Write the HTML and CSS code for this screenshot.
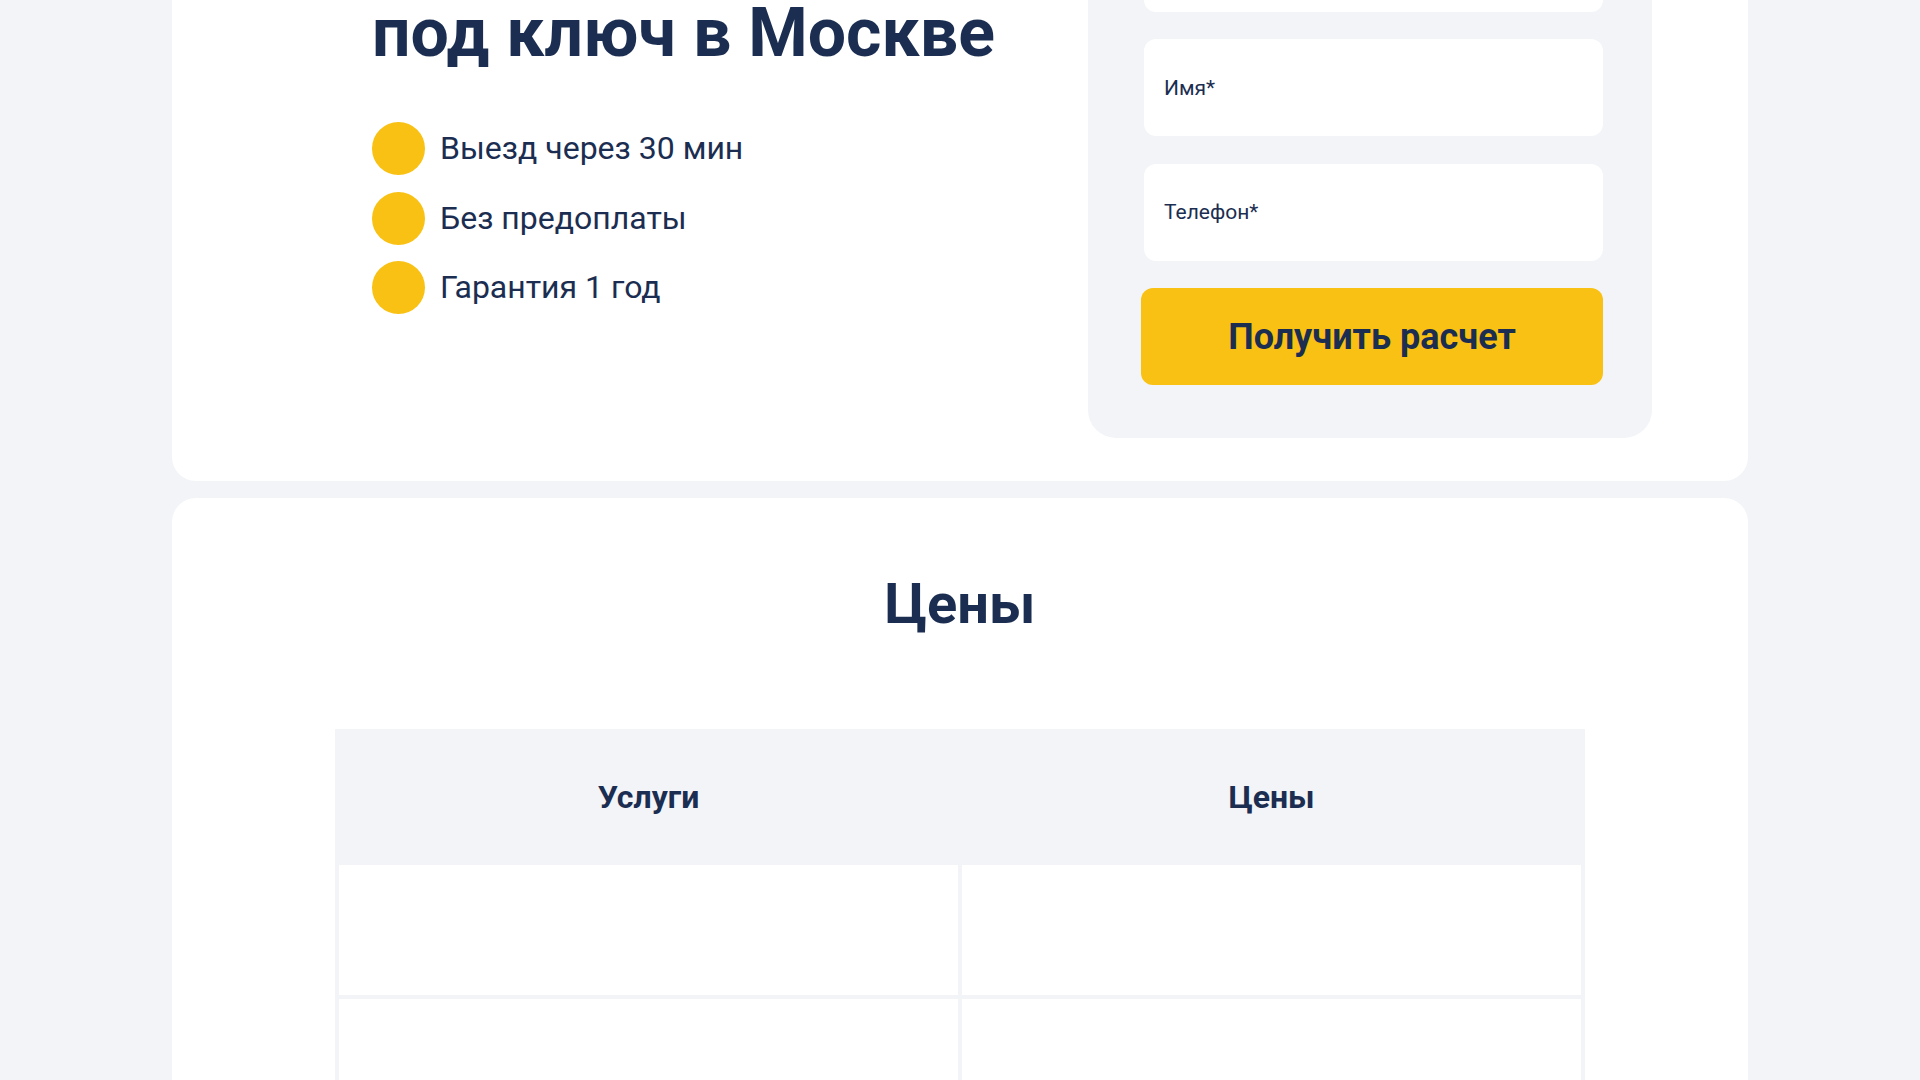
FILE: index.html
```html
<!DOCTYPE html>
<html lang="ru">
<head>
<meta charset="utf-8">
<title>Цены</title>
<link rel="stylesheet" href="styles.css">
</head>
<body>
<div class="page">
  <section class="card hero">
    <div class="hero-text">
      <h1 class="hero-title">под ключ в Москве</h1>
      <ul class="perks">
        <li class="perk"><span class="perk-dot"></span><span class="perk-text">Выезд через 30 мин</span></li>
        <li class="perk"><span class="perk-dot"></span><span class="perk-text">Без предоплаты</span></li>
        <li class="perk"><span class="perk-dot"></span><span class="perk-text">Гарантия 1 год</span></li>
      </ul>
    </div>
    <form class="lead-form">
      <input class="field" type="text" aria-label="Поле">
      <input class="field" type="text" placeholder="Имя*">
      <input class="field" type="tel" placeholder="Телефон*">
      <button class="submit" type="button">Получить расчет</button>
    </form>
  </section>
  <section class="card prices">
    <h2 class="prices-title">Цены</h2>
    <table class="price-table">
      <thead>
        <tr><th>Услуги</th><th>Цены</th></tr>
      </thead>
      <tbody>
        <tr><td></td><td></td></tr>
        <tr><td></td><td></td></tr>
        <tr><td></td><td></td></tr>
      </tbody>
    </table>
  </section>
</div>
</body>
</html>
```
FILE: styles.css
```css
* { box-sizing: border-box; }
html, body { margin: 0; padding: 0; }
body {
  background: #f2f4f8;
  font-family: Roboto, "Noto Sans", "Liberation Sans", sans-serif;
  color: #1b2e51;
  overflow: hidden;
}
.page {
  width: 1576px;
  margin: -139px auto 0;
  display: flex;
  flex-direction: column;
  gap: 16.5px;
}
.card {
  background: #ffffff;
  border-radius: 24px;
}
.hero {
  display: grid;
  grid-template-columns: 1fr 564px;
  align-items: start;
  padding: 0 96px 43px 200px;
}
.hero-text {
  padding-top: 132px;
}
.hero-title {
  margin: 0;
  font-size: 68px;
  line-height: 1.2;
  font-weight: 700;
  color: #1b2e51;
}
.perks {
  list-style: none;
  margin: 47.5px 0 0;
  padding: 0;
  display: flex;
  flex-direction: column;
  gap: 16.5px;
}
.perk {
  display: flex;
  align-items: center;
  gap: 15px;
}
.perk-dot {
  width: 53px;
  height: 53px;
  border-radius: 50%;
  background: #f8c113;
  flex: none;
}
.perk-text {
  font-size: 32px;
  line-height: 1.2;
}
.lead-form {
  background: #f2f4f8;
  border-radius: 28px;
  padding: 53.5px 49px 53px 53px;
  display: flex;
  flex-direction: column;
  gap: 27.5px;
}
.field {
  display: block;
  height: 97px;
  margin-left: 3px;
  border: none;
  border-radius: 12px;
  background: #ffffff;
  padding: 0 20px;
  font-family: inherit;
  font-size: 21px;
  color: #1b2e51;
  outline: none;
}
.field::placeholder { color: #1b2e51; opacity: 1; }
.submit {
  height: 97px;
  border: none;
  border-radius: 12px;
  background: #f8c113;
  font-family: inherit;
  font-size: 36px;
  font-weight: 700;
  color: #1b2e51;
  cursor: pointer;
}
.prices {
  padding: 73px 0 80px;
  min-height: 800px;
}
.prices-title {
  margin: 0;
  text-align: center;
  font-size: 56px;
  line-height: 1.2;
  font-weight: 700;
}
.price-table {
  margin: 91px auto 0;
  width: 1250px;
  table-layout: fixed;
  border-collapse: separate;
  border-spacing: 4px;
  background: #f2f4f8;
}
.price-table th {
  height: 128px;
  font-size: 32px;
  font-weight: 700;
  text-align: center;
  color: #1b2e51;
  padding: 0;
}
.price-table td {
  height: 130px;
  background: #ffffff;
  padding: 0;
}
```
